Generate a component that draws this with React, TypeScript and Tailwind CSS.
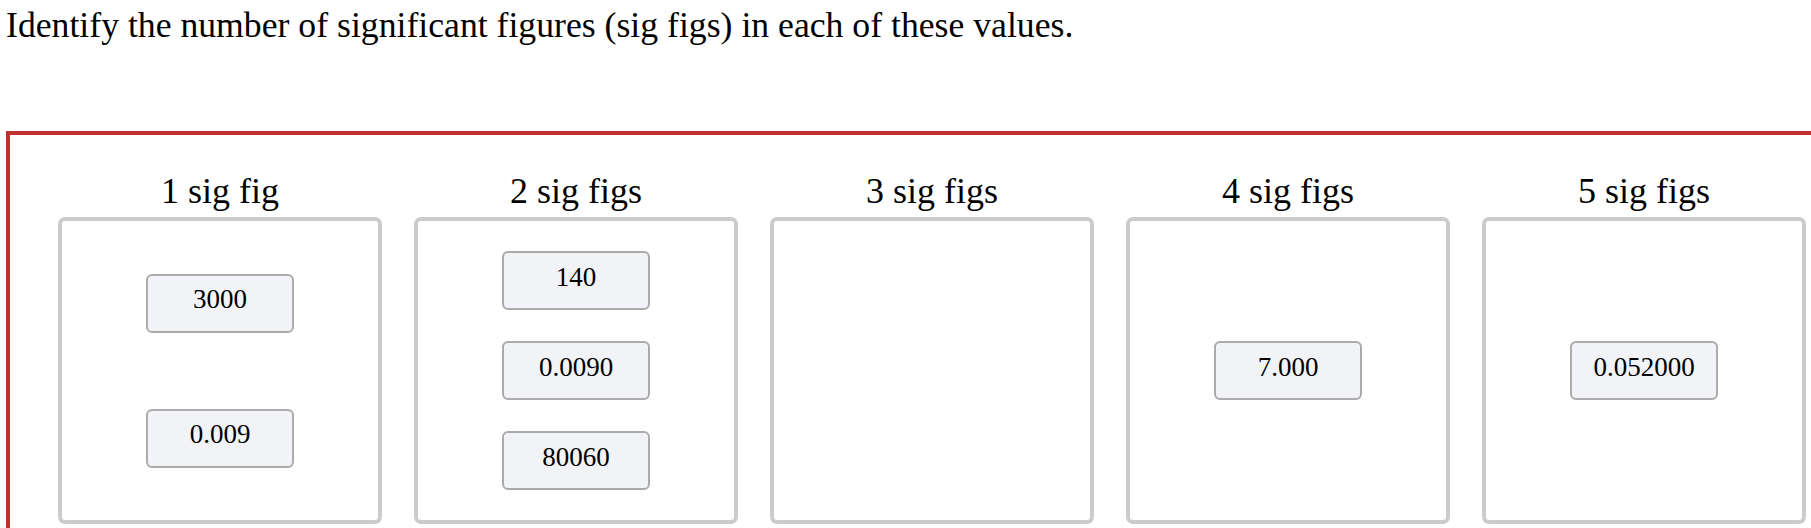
import React from "react";

type Bucket = {
  label: string;
  values: string[];
  gap: string;
};

const buckets: Bucket[] = [
  { label: "1 sig fig", values: ["3000", "0.009"], gap: "gap-[76px]" },
  { label: "2 sig figs", values: ["140", "0.0090", "80060"], gap: "gap-[31px]" },
  { label: "3 sig figs", values: [], gap: "gap-0" },
  { label: "4 sig figs", values: ["7.000"], gap: "gap-0" },
  { label: "5 sig figs", values: ["0.052000"], gap: "gap-0" },
];

function Chip({ value }: { value: string }) {
  return (
    <div className="flex h-[59px] w-[148px] shrink-0 items-center justify-center rounded-[6px] border-2 border-[#ababab] bg-[#f2f3f7] pb-[7px] text-[27px] leading-[31px]">
      {value}
    </div>
  );
}

function Column({ bucket }: { bucket: Bucket }) {
  return (
    <div className="flex w-[324px] shrink-0 flex-col items-center">
      <h3 className="mb-[6px] text-[36px] font-normal leading-[40px]">{bucket.label}</h3>
      <div
        className={`flex h-[307px] w-[324px] flex-col items-center justify-center rounded-[7px] border-4 border-[#cccccc] bg-white ${bucket.gap}`}
      >
        {bucket.values.map((v) => (
          <Chip key={v} value={v} />
        ))}
      </div>
    </div>
  );
}

export default function App() {
  return (
    <div className="h-[528px] w-[1811px] overflow-hidden bg-white font-['Liberation_Serif','Times_New_Roman',serif] text-black">
      <p className="pl-[6px] pt-[5px] text-[35.7px] leading-[40px]">
        Identify the number of significant figures (sig figs) in each of these values.
      </p>
      <div className="ml-[6px] mt-[86px] w-[1860px] border-4 border-[#c22f2f] pb-[24px] pl-[48px] pt-[36px]">
        <div className="flex gap-[32px]">
          {buckets.map((b) => (
            <Column key={b.label} bucket={b} />
          ))}
        </div>
      </div>
    </div>
  );
}
